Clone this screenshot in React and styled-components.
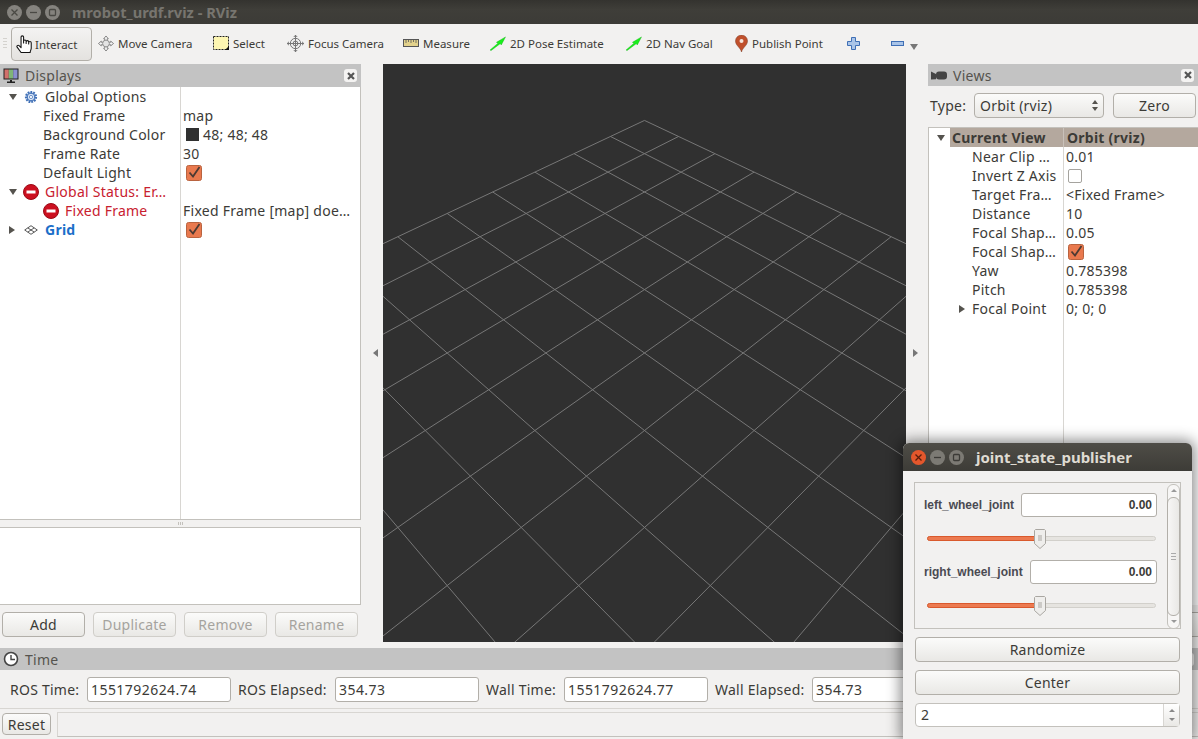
import React from 'react'
import styled, { createGlobalStyle } from 'styled-components'

const UI_FONT = '"Noto Sans", "Open Sans", sans-serif'

const GlobalStyle = createGlobalStyle`
  html, body {
    margin: 0;
    padding: 0;
    background: #f2f1f0;
  }
  * {
    box-sizing: border-box;
  }
`

/* ---------- icons ---------- */

const HandIcon = () => (
  <svg width="17" height="18" viewBox="1 0.5 15.500 17">
    <path d="M5.500 9V2.500a1.200 1.200 0 0 1 2.400 0V8V6.500a1.200 1.200 0 0 1 2.400 0V8.500V7a1.200 1.200 0 0 1 2.400 0V9V7.800a1.200 1.200 0 0 1 2.400 0V13c0 1.500-1 2.500-1 4H5.500L1.800 12c-.8-1.200 .8-2.400 1.800-1.400L5.500 12.500z" fill="#fff" stroke="#111" strokeWidth="1" strokeLinejoin="round" />
  </svg>
)

const MoveIcon = () => (
  <svg width="16" height="17" viewBox="0 0 17 17">
    <path d="M8.500 .5l2.500 3H9.800v3h-2.600v-3H6zM8.500 16.500l2.500-3H9.800v-3h-2.600v3H6zM.5 8.500l3-2.500v1.200h3v2.600h-3V11zM16.500 8.500l-3-2.500v1.200h-3v2.600h3V11z" fill="#f4f4f4" stroke="#666" strokeWidth=".8" strokeLinejoin="round" />
    <circle cx="8.500" cy="8.500" r="3.600" fill="#e4e4e4" stroke="#777" strokeWidth=".8" />
  </svg>
)

const SelectIcon = () => (
  <svg width="16" height="14" viewBox="0 0 16 14">
    <rect x=".5" y=".5" width="15" height="13" fill="#fdf6b2" stroke="#222" strokeDasharray="2 1" />
    <path d="M12 14h4v-4z" fill="#111" />
  </svg>
)

const FocusIcon = () => (
  <svg width="17" height="17" viewBox="0 0 17 17" fill="none" stroke="#777" strokeWidth="1">
    <circle cx="8.500" cy="8.500" r="5.200" fill="#eee" />
    <circle cx="8.500" cy="8.500" r="2.400" />
    <path d="M8.500 0v17M0 8.500h17" />
    <path d="M6.800 2l1.700-1.800L10.200 2M6.800 15l1.700 1.800 1.700-1.800M2 6.800L.2 8.500 2 10.200M15 6.800l1.800 1.700-1.800 1.700" />
  </svg>
)

const RulerIcon = () => (
  <svg width="16" height="8" viewBox="0 0 16 8">
    <rect x=".5" y=".5" width="15" height="7" fill="#e3d28c" stroke="#555" />
    <path d="M3 1v3M5.500 1v2M8 1v3M10.500 1v2M13 1v3" stroke="#555" strokeWidth=".8" />
  </svg>
)

const GreenArrowIcon = () => (
  <svg width="16" height="15" viewBox="0 0 17 15">
    <path d="M0 14.500L8.500 7.200 6.800 6.300 16.500 .5 12 9l-1.200-1.300L1.200 15z" fill="#19f01c" stroke="#12a814" strokeWidth=".4" />
  </svg>
)

const PinIcon = () => (
  <svg width="13" height="17" viewBox="0 0 13 17">
    <path d="M6.500 17C5.500 12.500 .5 10.500 .5 6a6 6 0 0 1 12 0c0 4.500-5 6.500-6 11z" fill="#c0502c" stroke="#7e3a22" strokeWidth=".5" />
    <circle cx="6.500" cy="6" r="2" fill="#f5e6dc" />
  </svg>
)

const PlusIcon = () => (
  <svg width="13" height="13" viewBox="0 0 13 13">
    <path d="M4.500 .5h4v4h4v4h-4v4h-4v-4h-4v-4h4z" fill="#a9c4e8" stroke="#3f6fb5" />
  </svg>
)

const MinusIcon = () => (
  <svg width="13" height="5" viewBox="0 0 13 5">
    <rect x=".5" y=".5" width="12" height="4" fill="#a9c4e8" stroke="#3f6fb5" />
  </svg>
)

const MonitorIcon = () => (
  <svg width="16" height="16" viewBox="0 0 16 16">
    <rect x=".5" y=".5" width="15" height="11" fill="#222" />
    <rect x="1.500" y="1.500" width="4.300" height="9" fill="#d2706c" />
    <rect x="5.800" y="1.500" width="4.400" height="9" fill="#7fb478" />
    <rect x="10.200" y="1.500" width="4.300" height="9" fill="#8a8fd0" />
    <path d="M7 12h2v1.500h3V15H4v-1.500h3z" fill="#222" />
  </svg>
)

const CloseGlyph = () => (
  <svg width="8" height="8" viewBox="0 0 8 8">
    <path d="M1 1l6 6M7 1l-6 6" stroke="#555" strokeWidth="2.200" />
  </svg>
)

const CameraIcon = () => (
  <svg width="16" height="9" viewBox="-1 0 16 9">
    <path d="M-1 .5l5 2.500V.8h0v7.400L-1 8.500z" fill="#444" />
    <rect x="4" y=".5" width="11" height="8" rx="3" fill="#444" />
  </svg>
)

const ClockIcon = () => (
  <svg width="16" height="16" viewBox="0 0 16 16" fill="#fff" stroke="#444">
    <circle cx="8" cy="8" r="6.500" strokeWidth="1.600" />
    <path d="M8 4v4.500h4" fill="none" strokeWidth="1.400" />
  </svg>
)

const GearIcon = () => (
  <svg width="14" height="14" viewBox="0 0 14 14">
    <circle cx="7" cy="7" r="5" fill="#b8cdec" stroke="#3f6fb5" strokeWidth="2.200" strokeDasharray="1.700 1.100" />
    <circle cx="7" cy="7" r="3.800" fill="#dbe6f6" stroke="#3f6fb5" />
    <circle cx="7" cy="7" r="1.600" fill="#fff" stroke="#3f6fb5" strokeWidth=".7" />
  </svg>
)

const ErrorIcon = () => (
  <svg width="16" height="16" viewBox="0 0 16 16">
    <circle cx="8" cy="8" r="7.500" fill="#cc1020" stroke="#9c0a16" />
    <rect x="3.500" y="6.500" width="9" height="3" fill="#fff" />
  </svg>
)

const GridIcon = () => (
  <svg width="14" height="10" viewBox="0 0 14 10" fill="none" stroke="#444" strokeWidth=".9">
    <path d="M7 .7L13.300 5 7 9.300 .7 5zM3.800 2.900L10.200 7.100M10.200 2.900L3.800 7.100" />
  </svg>
)

const CheckedBox = () => (
  <svg width="16" height="16" viewBox="0 0 16 16">
    <rect x=".5" y=".5" width="15" height="15" rx="2" fill="#e9794e" stroke="#b9633f" />
    <path d="M3.500 7.500l3.500 4L13.500 2" fill="none" stroke="#4c3a33" strokeWidth="1.800" />
  </svg>
)

const SliderHandle = () => (
  <svg width="12" height="20" viewBox="0 0 12 20">
    <path d="M1.500 .5h9l1 1v13L6 19.500 .5 14.500v-13z" fill="#efeeec" stroke="#a9a6a1" />
    <path d="M4 7h4M4 9h4M4 11h4" stroke="#a9a6a1" />
  </svg>
)

// window manager button glyph: x, bar or small square
const WinGlyph = ({ kind, color }) => (
  <svg width="9" height="9" viewBox="0 0 9 9" fill="none" stroke={color} strokeWidth="1.300">
    {kind === 'close' && <path d="M1.500 1.500l6 6M7.500 1.500l-6 6" />}
    {kind === 'min' && <path d="M1 4.500h7" />}
    {kind === 'max' && <rect x="1.500" y="1.500" width="6" height="6" rx="1" />}
  </svg>
)

/* ---------- the 3D grid, projected like the rviz orbit camera ---------- */

const VIEW_W = 523
const VIEW_H = 578
const FOCAL = 289 / Math.tan(Math.PI / 8)

function project(x, y) {
  const along = (x + y) / 2
  const side = (x - y) / Math.SQRT2
  const depth = 10 + along
  return [VIEW_W / 2 + (FOCAL * side) / depth, VIEW_H / 2 - (FOCAL * along) / depth]
}

function gridLines() {
  const lines = []
  for (let i = -5; i <= 5; i++) {
    lines.push([project(i, -5), project(i, 5)])
    lines.push([project(-5, i), project(5, i)])
  }
  return lines
}

const GridView = () => (
  <svg width={VIEW_W} height={VIEW_H} viewBox={`0 0 ${VIEW_W} ${VIEW_H}`}>
    {gridLines().map(([a, b], i) => (
      <line key={i} x1={a[0]} y1={a[1]} x2={b[0]} y2={b[1]} stroke="#777" strokeWidth="1" />
    ))}
  </svg>
)

/* ---------- data ---------- */

const TOOLS = [
  { label: 'Move Camera', icon: <MoveIcon />, width: 115 },
  { label: 'Select', icon: <SelectIcon />, width: 74 },
  { label: 'Focus Camera', icon: <FocusIcon />, width: 116 },
  { label: 'Measure', icon: <RulerIcon />, width: 87 },
  { label: '2D Pose Estimate', icon: <GreenArrowIcon />, width: 136 },
  { label: '2D Nav Goal', icon: <GreenArrowIcon />, width: 109 },
  { label: 'Publish Point', icon: <PinIcon />, width: 112 },
  { icon: <PlusIcon />, width: 44 },
  { icon: <MinusIcon />, width: 19 },
]

const VIEW_ROWS = [
  ['Near Clip …', '0.01'],
  ['Invert Z Axis', <EmptyBoxSlot key="b" />],
  ['Target Fra…', '<Fixed Frame>'],
  ['Distance', '10'],
  ['Focal Shap…', '0.05'],
  ['Focal Shap…', <CheckedBox key="c" />],
  ['Yaw', '0.785398'],
  ['Pitch', '0.785398'],
]

function EmptyBoxSlot() {
  return <EmptyBox />
}

/* ---------- page ---------- */

export default function App() {
  return (
    <Page>
      <GlobalStyle />
      <TitleBar>
        <WinButtons>
          <WinDot><WinGlyph kind="close" color="#4a4944" /></WinDot>
          <WinDot><WinGlyph kind="min" color="#4a4944" /></WinDot>
          <WinDot><WinGlyph kind="max" color="#4a4944" /></WinDot>
        </WinButtons>
        <WinTitle>mrobot_urdf.rviz - RViz</WinTitle>
      </TitleBar>

      <Toolbar>
        <Grip />
        <ActiveTool>
          <HandIcon />
          Interact
        </ActiveTool>
        {TOOLS.map((t, i) => (
          <Tool key={i} $w={t.width}>
            <ToolIcon>{t.icon}</ToolIcon>
            {t.label}
          </Tool>
        ))}
        <MoreArrow />
      </Toolbar>

      <Body>
        <LeftDock>
          <DockHeader>
            <MonitorIcon />
            <span>Displays</span>
            <CloseBox>
              <CloseGlyph />
            </CloseBox>
          </DockHeader>
          <DisplayTree>
            <Row>
              <Label $pad={8}>
                <Arrow $open />
                <RowIcon $gap={6}>
                  <GearIcon />
                </RowIcon>
                <Name $gap={7}>Global Options</Name>
              </Label>
            </Row>
            <Row>
              <Label $pad={43}>Fixed Frame</Label>
              <Value>map</Value>
            </Row>
            <Row>
              <Label $pad={43}>Background Color</Label>
              <Value>
                <Swatch />
                48; 48; 48
              </Value>
            </Row>
            <Row>
              <Label $pad={43}>Frame Rate</Label>
              <Value>30</Value>
            </Row>
            <Row>
              <Label $pad={43}>Default Light</Label>
              <Value $box>
                <CheckedBox />
              </Value>
            </Row>
            <Row>
              <Label $pad={8} $error>
                <Arrow $open />
                <RowIcon $gap={5}>
                  <ErrorIcon />
                </RowIcon>
                <Name $gap={6}>Global Status: Er…</Name>
              </Label>
            </Row>
            <Row>
              <Label $pad={43} $error>
                <ErrorIcon />
                <Name $gap={6}>Fixed Frame</Name>
              </Label>
              <Value>Fixed Frame [map] doe…</Value>
            </Row>
            <Row>
              <Label $pad={8} $link>
                <Arrow />
                <RowIcon $gap={6}>
                  <GridIcon />
                </RowIcon>
                <Name $gap={7}>Grid</Name>
              </Label>
              <Value $box>
                <CheckedBox />
              </Value>
            </Row>
          </DisplayTree>
          <Splitter />
          <Description />
          <ButtonRow>
            <DockButton>Add</DockButton>
            <DockButton disabled>Duplicate</DockButton>
            <DockButton disabled>Remove</DockButton>
            <DockButton disabled>Rename</DockButton>
          </ButtonRow>
        </LeftDock>

        <SideHandle $left>
          <HandleArrow $left />
        </SideHandle>
        <RenderView>
          <GridView />
        </RenderView>
        <SideHandle>
          <HandleArrow />
        </SideHandle>

        <RightDock>
          <DockHeader $short>
            <CameraIcon />
            <span>Views</span>
            <CloseBox>
              <CloseGlyph />
            </CloseBox>
          </DockHeader>
          <TypeRow>
            <span>Type:</span>
            <Combo>
              Orbit (rviz)
              <ComboArrows>
                <i />
                <b />
              </ComboArrows>
            </Combo>
            <ZeroButton>Zero</ZeroButton>
          </TypeRow>
          <ViewTree>
            <ViewHeadRow>
              <ViewArrowCell>
                <Arrow $open />
              </ViewArrowCell>
              <ViewHeadName>Current View</ViewHeadName>
              <ViewHeadValue>Orbit (rviz)</ViewHeadValue>
            </ViewHeadRow>
            {VIEW_ROWS.map(([name, value], i) => (
              <ViewRow key={i}>
                <ViewName>{name}</ViewName>
                <ViewValue $box={typeof value !== 'string'}>{value}</ViewValue>
              </ViewRow>
            ))}
            <ViewRow>
              <ViewName $arrow>
                <Arrow />
                Focal Point
              </ViewName>
              <ViewValue>0; 0; 0</ViewValue>
            </ViewRow>
          </ViewTree>
          <RightButtons>
            <DockButton>Save</DockButton>
            <DockButton>Remove</DockButton>
            <DockButton>Rename</DockButton>
          </RightButtons>
        </RightDock>
      </Body>

      <TimeDock>
        <DockHeader $short>
          <ClockIcon />
          <span>Time</span>
          <CloseBox>
            <CloseGlyph />
          </CloseBox>
        </DockHeader>
        <TimeRow>
          <TimeLabel $w={77}>ROS Time:</TimeLabel>
          <TimeInput readOnly value="1551792624.74" />
          <TimeLabel $w={97} $gap={7}>ROS Elapsed:</TimeLabel>
          <TimeInput readOnly value="354.73" />
          <TimeLabel $w={78} $gap={7}>Wall Time:</TimeLabel>
          <TimeInput readOnly value="1551792624.77" />
          <TimeLabel $w={97} $gap={7}>Wall Elapsed:</TimeLabel>
          <TimeInput readOnly value="354.73" />
        </TimeRow>
      </TimeDock>

      <StatusBar>
        <ResetButton>Reset</ResetButton>
        <StatusField />
      </StatusBar>

      <JointDialog>
        <DialogTitle>
          <DialogDot $close><WinGlyph kind="close" color="#5b1d0a" /></DialogDot>
          <DialogDot><WinGlyph kind="min" color="#3c3b37" /></DialogDot>
          <DialogDot><WinGlyph kind="max" color="#3c3b37" /></DialogDot>
          <DialogName>joint_state_publisher</DialogName>
        </DialogTitle>
        <DialogBody>
          <JointGroup>
            <JointList>
              <JointRow>
                <JointName>left_wheel_joint</JointName>
                <JointInput readOnly value="0.00" />
              </JointRow>
              <SliderRow>
                <SliderTrack>
                  <SliderFill style={{ width: '49.500%' }} />
                  <HandleSpot>
                    <SliderHandle />
                  </HandleSpot>
                </SliderTrack>
              </SliderRow>
              <JointRow>
                <JointName>right_wheel_joint</JointName>
                <JointInput readOnly value="0.00" />
              </JointRow>
              <SliderRow>
                <SliderTrack>
                  <SliderFill style={{ width: '49.500%' }} />
                  <HandleSpot>
                    <SliderHandle />
                  </HandleSpot>
                </SliderTrack>
              </SliderRow>
            </JointList>
            <ScrollBar>
              <ScrollUp />
              <ScrollThumb>
                <ThumbGrip />
              </ScrollThumb>
              <ScrollDown />
            </ScrollBar>
          </JointGroup>
          <WideButton>Randomize</WideButton>
          <WideButton>Center</WideButton>
          <SpinBox>
            <SpinValue>2</SpinValue>
            <SpinArrows>
              <i />
              <b />
            </SpinArrows>
          </SpinBox>
        </DialogBody>
      </JointDialog>
    </Page>
  )
}

/* ---------- styles ---------- */

const Page = styled.div`
  position: relative;
  width: 1198px;
  height: 739px;
  overflow: hidden;
  display: flex;
  flex-direction: column;
  background: #f2f1f0;
  color: #3c3b37;
  font-family: ${UI_FONT};
  font-size: 14px;
  letter-spacing: 0.25px;
`

const TitleBar = styled.div`
  height: 24px;
  flex: none;
  display: flex;
  align-items: center;
  background: linear-gradient(#34332f, #3f3e39 40%, #3c3b37);
`

const WinButtons = styled.div`
  display: flex;
  gap: 4px;
  padding-left: 7px;
`

const WinDot = styled.span`
  width: 15px;
  height: 15px;
  display: flex;
  align-items: center;
  justify-content: center;
  border-radius: 50%;
  background: #85837e;
`

const WinTitle = styled.div`
  margin-left: 12px;
  color: #77756f;
  font-weight: 700;
  font-size: 14.7px;
  letter-spacing: 0;
`

const Toolbar = styled.div`
  height: 40px;
  flex: none;
  display: flex;
  align-items: center;
  padding-left: 3px;
  font-size: 11.5px;
  letter-spacing: 0;
`

const Grip = styled.div`
  width: 4px;
  height: 12px;
  margin-right: 4px;
  background: repeating-linear-gradient(#d4d2ce 0 1px, transparent 1px 3px);
`

const ActiveTool = styled.div`
  width: 81px;
  height: 34px;
  margin-right: 6px;
  display: flex;
  align-items: center;
  gap: 2px;
  padding-left: 4px;
  border: 1px solid #b2afa9;
  border-radius: 4px;
  background: linear-gradient(#f4f3f2, #e4e2df);
`

const Tool = styled.div`
  width: ${(p) => p.$w}px;
  flex: none;
  display: flex;
  align-items: center;
  padding-bottom: 2px;
  white-space: nowrap;
`

const ToolIcon = styled.span`
  display: flex;
  align-items: center;
  margin-right: 4px;
`

const MoreArrow = styled.span`
  margin: 5px 0 0 0;
  width: 0;
  height: 0;
  border-left: 4px solid transparent;
  border-right: 4px solid transparent;
  border-top: 6px solid #777;
`

const Body = styled.div`
  height: 578px;
  flex: none;
  display: flex;
`

const LeftDock = styled.div`
  width: 361px;
  flex: none;
  display: flex;
  flex-direction: column;
`

const RightDock = styled.div`
  width: 270px;
  flex: none;
  display: flex;
  flex-direction: column;
`

const DockHeader = styled.div`
  height: ${(p) => (p.$short ? 22 : 23)}px;
  flex: none;
  display: flex;
  align-items: center;
  gap: 6px;
  padding: 0 4px 0 3px;
  background: #c3c3c3;
  color: #55534e;
  span {
    flex: 1;
  }
`

const CloseBox = styled.div`
  width: 13px;
  height: 13px;
  display: flex;
  align-items: center;
  justify-content: center;
  border-radius: 3px;
  background: #f4f3f2;
`

const DisplayTree = styled.div`
  flex: 1;
  border-right: 1px solid #c3c1bc;
  border-bottom: 1px solid #c3c1bc;
  background: linear-gradient(#d8d6d2, #d8d6d2) no-repeat 180px 0 / 1px 100%, #fff;
`

const Row = styled.div`
  height: 19px;
  display: grid;
  grid-template-columns: 180px 1fr;
  align-items: center;
  white-space: nowrap;
`

const Label = styled.div`
  display: flex;
  align-items: center;
  padding-left: ${(p) => p.$pad}px;
  color: ${(p) => (p.$error ? '#c8202f' : p.$link ? '#1c6fc9' : 'inherit')};
  font-weight: ${(p) => (p.$link ? 700 : 400)};
`

const RowIcon = styled.span`
  display: flex;
  margin-left: ${(p) => p.$gap}px;
`

const Name = styled.span`
  margin-left: ${(p) => p.$gap}px;
`

const Arrow = styled.span`
  flex: none;
  width: 0;
  height: 0;
  ${(p) =>
    p.$open
      ? `
    margin: 1px 1px 0;
    border-left: 4px solid transparent;
    border-right: 4px solid transparent;
    border-top: 6px solid #55534e;
  `
      : `
    margin: 0 3px 0 1px;
    border-top: 4px solid transparent;
    border-bottom: 4px solid transparent;
    border-left: 6px solid #55534e;
  `}
`

const Value = styled.div`
  display: flex;
  align-items: center;
  padding-left: ${(p) => (p.$box ? 6 : 3)}px;
`

const Swatch = styled.span`
  width: 13px;
  height: 13px;
  margin: 0 4px 0 3px;
  background: #303030;
`

const Splitter = styled.div`
  height: 7px;
  flex: none;
  background: repeating-linear-gradient(90deg, #c3c1bc 0 1px, transparent 1px 2px) no-repeat 178px 2px / 6px 3px;
`

const Description = styled.div`
  height: 78px;
  flex: none;
  background: #fff;
  border: 1px solid #c3c1bc;
  border-left: none;
`

const ButtonRow = styled.div`
  height: 37px;
  flex: none;
  display: flex;
  gap: 8px;
  padding: 7px 0 0 2px;
`

const DockButton = styled.div`
  width: 83px;
  height: 25px;
  flex: none;
  display: flex;
  align-items: center;
  justify-content: center;
  border: 1px solid ${(p) => (p.disabled ? '#d0cec9' : '#b2afa9')};
  border-radius: 4px;
  background: linear-gradient(#fbfbfa, #e9e8e5);
  color: ${(p) => (p.disabled ? '#a5a39e' : '#3c3b37')};
`

const SideHandle = styled.div`
  width: 22px;
  flex: none;
  display: flex;
  align-items: center;
  justify-content: ${(p) => (p.$left ? 'flex-end' : 'flex-start')};
  padding: 0 5px 0 7px;
`

const HandleArrow = styled.span`
  width: 0;
  height: 0;
  border-top: 4px solid transparent;
  border-bottom: 4px solid transparent;
  ${(p) => (p.$left ? 'border-right: 5px solid #777;' : 'border-left: 5px solid #777;')}
`

const RenderView = styled.div`
  width: ${VIEW_W}px;
  flex: none;
  background: #303030;
  svg {
    display: block;
  }
`

const TypeRow = styled.div`
  height: 41px;
  flex: none;
  display: flex;
  align-items: center;
  padding: 0 2px 2px;
  span {
    width: 44px;
  }
`

const Combo = styled.div`
  width: 130px;
  height: 25px;
  display: flex;
  align-items: center;
  justify-content: space-between;
  padding: 0 5px;
  border: 1px solid #b2afa9;
  border-radius: 4px;
  background: linear-gradient(#fbfbfa, #e9e8e5);
`

const ComboArrows = styled.span`
  display: flex;
  flex-direction: column;
  gap: 3px;
  && {
    width: auto;
  }
  i {
    border-left: 3px solid transparent;
    border-right: 3px solid transparent;
    border-bottom: 4px solid #55534e;
  }
  b {
    border-left: 3px solid transparent;
    border-right: 3px solid transparent;
    border-top: 4px solid #55534e;
  }
`

const ZeroButton = styled(DockButton)`
  margin-left: 9px;
`

const ViewTree = styled.div`
  height: 478px;
  flex: none;
  border-top: 1px solid #c3c1bc;
  border-left: 1px solid #c3c1bc;
  background: linear-gradient(#d8d6d2, #d8d6d2) no-repeat 134px 0 / 1px 100%, #fff;
`

const ViewHeadRow = styled.div`
  height: 19px;
  display: grid;
  grid-template-columns: 21px 113px 1fr;
  align-items: center;
  font-weight: 700;
`

const ViewArrowCell = styled.div`
  padding-left: 7px;
  display: flex;
  background: #fff;
  height: 100%;
  align-items: center;
`

const ViewHeadName = styled.div`
  height: 100%;
  padding-left: 2px;
  line-height: 19px;
  background: #b4a89e;
  white-space: nowrap;
`

const ViewHeadValue = styled.div`
  height: 100%;
  padding-left: 3px;
  line-height: 19px;
  background: #b4a89e;
  border-left: 1px solid #c9c1ba;
`

const ViewRow = styled.div`
  height: 19px;
  display: grid;
  grid-template-columns: 134px 1fr;
  align-items: center;
  white-space: nowrap;
`

const ViewName = styled.div`
  display: flex;
  align-items: center;
  padding-left: ${(p) => (p.$arrow ? 29 : 43)}px;
  span {
    margin-right: 7px;
  }
`

const ViewValue = styled.div`
  display: flex;
  padding-left: ${(p) => (p.$box ? 5 : 3)}px;
`

const EmptyBox = styled.span`
  width: 14px;
  height: 14px;
  border: 1px solid #a5a39e;
  border-radius: 2px;
  background: #fff;
`

const RightButtons = styled.div`
  display: flex;
  gap: 8px;
  padding-top: 7px;
  justify-content: flex-end;
  margin-right: -5px;
`

const TimeDock = styled.div`
  height: 66px;
  flex: none;
  padding-top: 6px;
`

const TimeRow = styled.div`
  display: flex;
  align-items: center;
  padding: 7px 0 0 10px;
`

const TimeLabel = styled.span`
  width: ${(p) => p.$w}px;
  margin-left: ${(p) => p.$gap || 0}px;
  flex: none;
  white-space: nowrap;
`

const TimeInput = styled.input`
  width: 144px;
  height: 25px;
  flex: none;
  padding: 0 3px;
  border: 1px solid #b2afa9;
  border-radius: 3px;
  background: #fff;
  color: #3c3b37;
  font: inherit;
  letter-spacing: 0.45px;
  outline: none;
`

const StatusBar = styled.div`
  flex: 1;
  display: flex;
  align-items: center;
  padding: 2px 0 2px 2px;
  border-top: 1px solid #d8d6d2;
`

const ResetButton = styled.div`
  width: 49px;
  height: 22px;
  display: flex;
  align-items: center;
  justify-content: center;
  border: 1px solid #b2afa9;
  border-radius: 4px;
  background: linear-gradient(#fbfbfa, #e9e8e5);
`

const StatusField = styled.div`
  flex: 1;
  height: 25px;
  margin-left: 6px;
  border-top: 1px solid #d8d6d2;
  border-left: 1px solid #d8d6d2;
  border-bottom: 1px solid #c3c1bc;
`

const JointDialog = styled.div`
  position: absolute;
  left: 903px;
  top: 443px;
  width: 289px;
  height: 296px;
  display: flex;
  flex-direction: column;
  border-radius: 6px 6px 0 0;
  background: #f2f1f0;
  box-shadow: 0 0 14px 3px rgba(0, 0, 0, 0.45);
`

const DialogTitle = styled.div`
  height: 28px;
  flex: none;
  display: flex;
  align-items: center;
  gap: 4px;
  padding-left: 8px;
  border-radius: 6px 6px 0 0;
  background: linear-gradient(#4f4d47, #3d3c37);
`

const DialogDot = styled.span`
  width: 15px;
  height: 15px;
  display: flex;
  align-items: center;
  justify-content: center;
  border-radius: 50%;
  background: ${(p) => (p.$close ? '#e4572c' : '#7c7a74')};
`

const DialogName = styled.span`
  margin-left: 8px;
  color: #dfdbd2;
  font-weight: 700;
  font-size: 15px;
  letter-spacing: 0;
`

const DialogBody = styled.div`
  flex: 1;
  display: flex;
  flex-direction: column;
  gap: 8px;
  padding: 11px 12px 0 11px;
`

const JointGroup = styled.div`
  height: 147px;
  width: 267px;
  margin-bottom: 0;
  display: flex;
  padding: 1px 0 0 9px;
  border: 1px solid #c3c1bc;
`

const JointList = styled.div`
  width: 233px;
  padding-top: 9px;
  display: flex;
  flex-direction: column;
`

const JointRow = styled.div`
  height: 24px;
  flex: none;
  display: flex;
  align-items: center;
  justify-content: space-between;
  letter-spacing: 0;
`

const JointName = styled.span`
  font-family: 'Liberation Sans', sans-serif;
  font-weight: 700;
  font-size: 12px;
  color: #4a4a52;
`

const JointInput = styled.input`
  flex: 1;
  min-width: 0;
  height: 24px;
  margin-left: 7px;
  padding: 0 4px;
  text-align: right;
  border: 1px solid #b2afa9;
  border-radius: 3px;
  background: #fff;
  color: #3c3b37;
  font-family: 'Liberation Sans', sans-serif;
  font-weight: 700;
  font-size: 12px;
  outline: none;
`

const SliderRow = styled.div`
  height: 43px;
  flex: none;
  padding: 19px 1px 0 3px;
`

const SliderTrack = styled.div`
  position: relative;
  height: 5px;
  border: 1px solid #d2d0cb;
  border-radius: 3px;
  background: #e6e4e0;
`

const SliderFill = styled.div`
  height: 5px;
  margin: -1px;
  border: 1px solid #d9592d;
  border-radius: 3px;
  background: #ec7a50;
`

const HandleSpot = styled.div`
  position: absolute;
  left: 106px;
  top: -8px;
  line-height: 0;
`

const ScrollBar = styled.div`
  width: 13px;
  height: 145px;
  margin-left: 10px;
  display: flex;
  flex-direction: column;
  border: 1px solid #c3c1bc;
  border-radius: 6px;
  background: #f7f6f5;
`

const ScrollUp = styled.div`
  height: 12px;
  flex: none;
  display: flex;
  justify-content: center;
  padding-top: 4px;
  &::before {
    content: '';
    height: 0;
    border-left: 3px solid transparent;
    border-right: 3px solid transparent;
    border-bottom: 3px solid #999;
  }
`

const ScrollDown = styled(ScrollUp)`
  &::before {
    border-bottom: none;
    border-top: 3px solid #999;
  }
`

const ScrollThumb = styled.div`
  flex: 1;
  display: flex;
  align-items: center;
  justify-content: center;
  margin: 0 -1px;
  border: 1px solid #b2afa9;
  border-radius: 6px;
  background: linear-gradient(90deg, #f7f6f5, #e9e8e5);
`

const ThumbGrip = styled.div`
  width: 5px;
  height: 7px;
  background: repeating-linear-gradient(#aaa 0 1px, transparent 1px 3px);
`

const WideButton = styled(DockButton)`
  width: 265px;
  margin-left: 1px;
`

const SpinBox = styled.div`
  width: 265px;
  height: 24px;
  margin-left: 1px;
  display: flex;
  border: 1px solid #c3c1bc;
  border-radius: 4px;
  background: #fff;
`

const SpinValue = styled.div`
  flex: 1;
  padding-left: 5px;
  line-height: 22px;
`

const SpinArrows = styled.div`
  width: 16px;
  display: flex;
  flex-direction: column;
  align-items: center;
  justify-content: center;
  gap: 6px;
  border-left: 1px solid #d8d6d2;
  background: linear-gradient(#fff, #e9e8e5);
  i {
    border-left: 3px solid transparent;
    border-right: 3px solid transparent;
    border-bottom: 3px solid #888;
  }
  b {
    border-left: 3px solid transparent;
    border-right: 3px solid transparent;
    border-top: 3px solid #888;
  }
`
